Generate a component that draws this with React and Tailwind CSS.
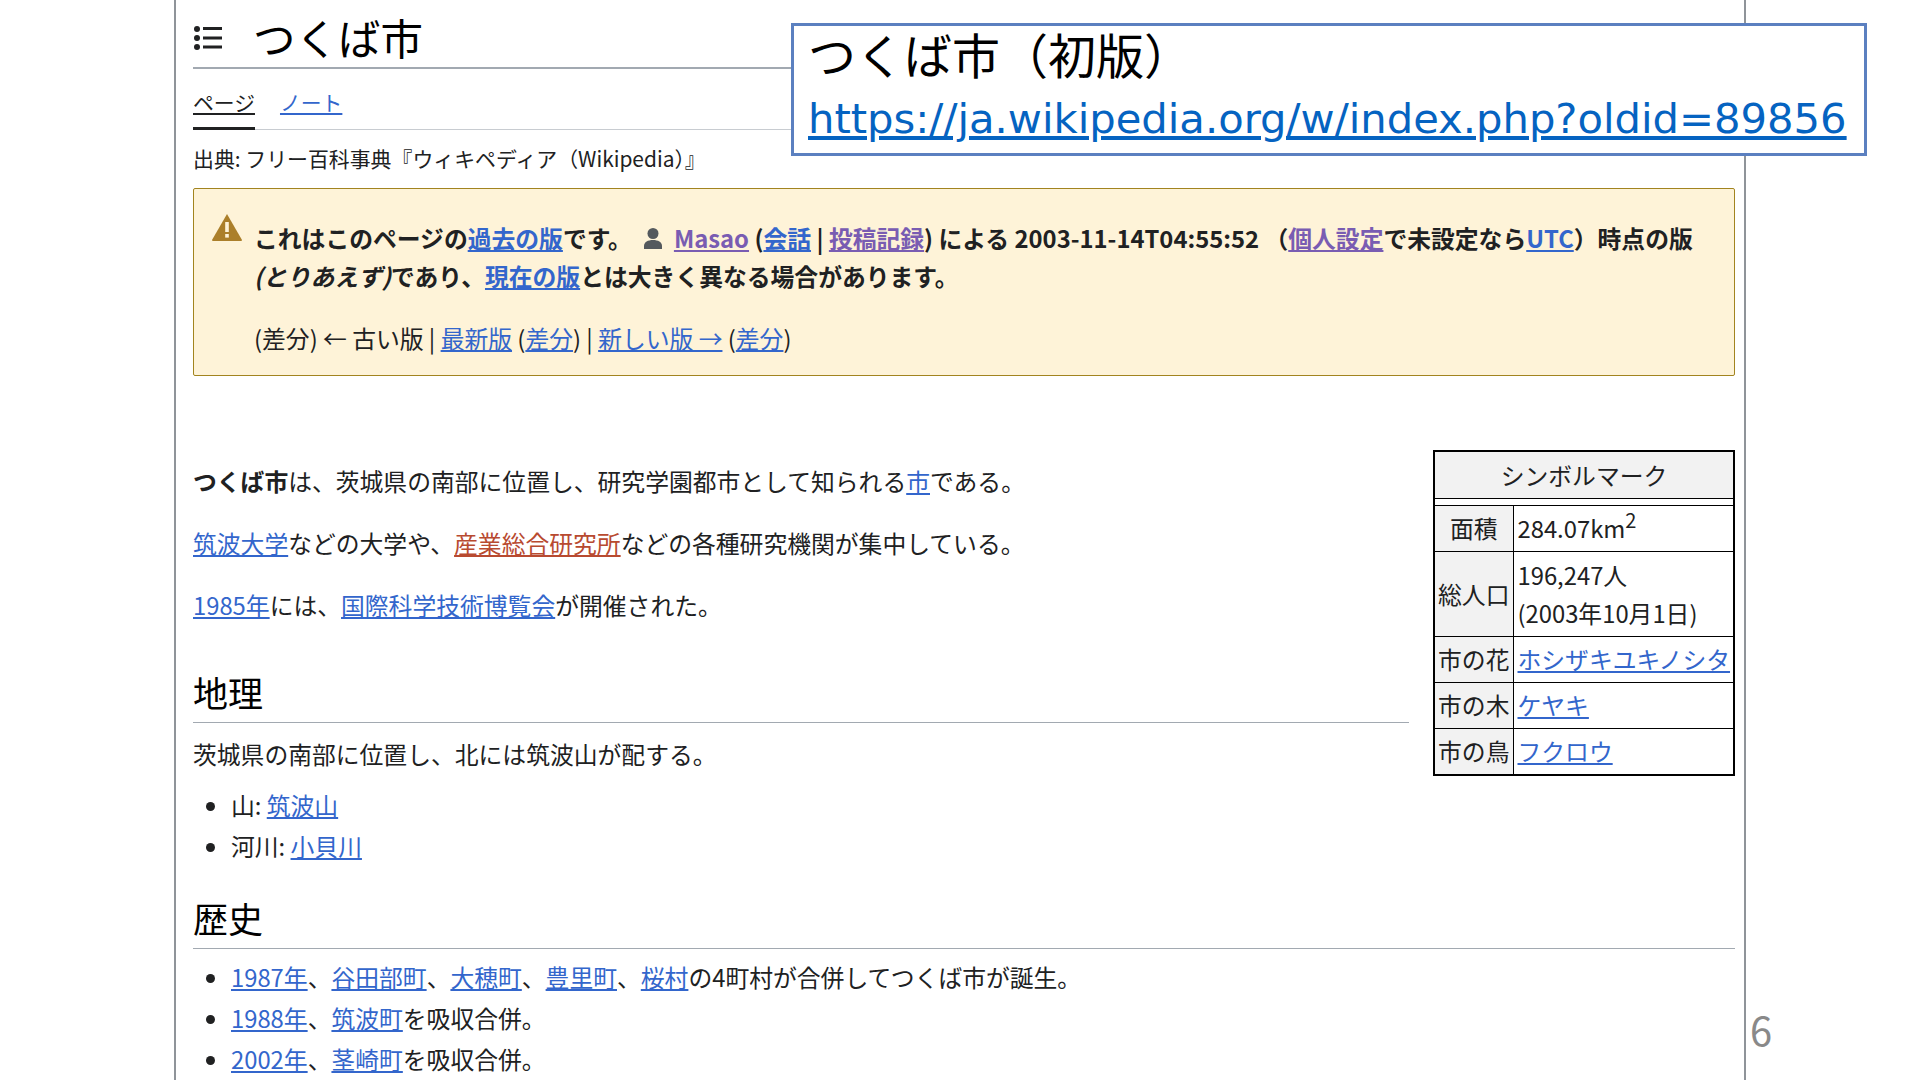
const A = ({ c = "text-[#3366cc]", children }) => <a className={`${c} underline`}>{children}</a>;
const V = ({ children }) => <a className="text-[#795cb2] underline">{children}</a>;

const Row = ({ h, label, children }) => (
  <tr>
    <th className={`${h} w-[79px] border border-black bg-[#f2f2f2] p-0 text-center font-normal whitespace-nowrap`}>{label}</th>
    <td className="border border-black py-0 pl-[4px] pr-0 whitespace-nowrap">{children}</td>
  </tr>
);

export default function App() {
  return (
    <div className="relative h-[1080px] w-[1920px] overflow-hidden bg-white text-[#202122] text-[23.8px] leading-[38px] font-['Noto_Sans_CJK_JP','Noto_Sans',sans-serif]">
      <div className="ml-[174px] h-[1080px] w-[1572px] border-x-2 border-[#8f9499] pl-[17px] pr-[9px]">
        <div className="flex h-[69px] items-start border-b-2 border-[#a2a9b1]">
          <svg className="mt-[24px] h-[28px] w-[30px]" viewBox="0 0 30 28" fill="#202122">
            <circle cx="4" cy="5" r="3" />
            <circle cx="4" cy="14" r="3" />
            <circle cx="4" cy="23" r="3" />
            <rect x="10" y="3" width="19" height="3" />
            <rect x="10" y="12.5" width="19" height="3" />
            <rect x="10" y="21.5" width="19" height="3" />
          </svg>
          <h1 className="ml-[30px] mt-[4px] text-[42.5px] leading-[66px] font-normal text-black">つくば市</h1>
        </div>
        <div className="flex h-[61px] gap-[25px] border-b border-[#c8ccd1] text-[20.8px] leading-[30px]">
          <div className="h-[61px] border-b-[3px] border-[#202122] pt-[18px]"><span className="underline">ページ</span></div>
          <div className="pt-[18px]"><span className="text-[#3366cc] underline">ノート</span></div>
        </div>
        <div className="mt-[13px] h-[31px] text-[20.9px] leading-[30px]">出典: フリー百科事典『ウィキペディア（Wikipedia）』</div>
        <div className="relative mt-[14px] h-[188px] rounded-[2px] border border-[#a2841f] bg-[#fef3d8] pl-[60px] pr-[20px] pt-[30px]">
          <svg className="absolute left-[17px] top-[24px] h-[28px] w-[32px]" viewBox="0 0 32 28">
            <path d="M16 1 L31 27 a1 1 0 0 1 -1 1 H2 a1 1 0 0 1 -1 -1 Z" fill="#ab7f2a" />
            <rect x="14.2" y="9" width="3.6" height="10" fill="#fef3d8" />
            <rect x="14.2" y="21" width="3.6" height="3.6" fill="#fef3d8" />
          </svg>
          <div className="font-bold">
            これはこのページの<A>過去の版</A>です。
            <svg className="ml-[10px] mr-[10px] inline-block h-[24px] w-[22px] align-[-3px]" viewBox="0 0 22 24" fill="#54595d">
              <circle cx="11" cy="6.5" r="5.5" />
              <path d="M2 22 v-3 c0 -4 4 -6 9 -6 s9 2 9 6 v3 Z" />
            </svg>
            <V>Masao</V> (<A>会話</A> | <V>投稿記録</V>) による 2003-11-14T04:55:52 （<V>個人設定</V>で未設定なら<A>UTC</A>）時点の版
            <br />
            <i>(とりあえず)</i>であり、<A>現在の版</A>とは大きく異なる場合があります。
          </div>
          <div className="mt-[24px]">
            (差分) ← 古い版 | <A>最新版</A> (<A>差分</A>) | <A>新しい版 →</A> (<A>差分</A>)
          </div>
        </div>

        <table className="float-right mt-[74px] ml-[24px] w-[302px] border-collapse border-2 border-black leading-[38px]">
          <tbody>
            <tr>
              <th colSpan={2} className="h-[47px] border border-black bg-[#f2f2f2] p-0 text-center font-normal">シンボルマーク</th>
            </tr>
            <tr><td colSpan={2} className="h-[7px] border border-black p-0"></td></tr>
            <Row h="h-[46px]" label="面積">284.07km<sup className="text-[20px] leading-none">2</sup></Row>
            <Row h="h-[85px]" label="総人口">196,247人<br />(2003年10月1日)</Row>
            <Row h="h-[46px]" label="市の花"><A>ホシザキユキノシタ</A></Row>
            <Row h="h-[46px]" label="市の木"><A>ケヤキ</A></Row>
            <Row h="h-[47px]" label="市の鳥"><A>フクロウ</A></Row>
          </tbody>
        </table>

        <p className="mt-[85.5px]"><b>つくば市</b>は、茨城県の南部に位置し、研究学園都市として知られる<A>市</A>である。</p>
        <p className="mt-[24.5px]"><A>筑波大学</A>などの大学や、<A c="text-[#b84a30]">産業総合研究所</A>などの各種研究機関が集中している。</p>
        <p className="mt-[24px]"><A>1985年</A>には、<A>国際科学技術博覧会</A>が開催された。</p>

        <h2 className="mt-[42px] overflow-hidden border-b border-[#a2a9b1] pb-[4px] text-[35px] leading-[52px] font-normal text-black">地理</h2>
        <p className="mt-[12px]">茨城県の南部に位置し、北には筑波山が配する。</p>
        <ul className="mt-[13px] list-disc pl-[38px] marker:text-[#202122]">
          <li className="h-[41px]">山: <A>筑波山</A></li>
          <li className="h-[41px]">河川: <A>小貝川</A></li>
        </ul>
        <h2 className="mt-[23.5px] overflow-hidden border-b border-[#a2a9b1] pb-[4px] text-[35px] leading-[52px] font-normal text-black">歴史</h2>
        <ul className="mt-[9.5px] list-disc pl-[38px]">
          <li className="h-[41px]"><A>1987年</A>、<A>谷田部町</A>、<A>大穂町</A>、<A>豊里町</A>、<A>桜村</A>の4町村が合併してつくば市が誕生。</li>
          <li className="h-[41px]"><A>1988年</A>、<A>筑波町</A>を吸収合併。</li>
          <li className="h-[41px]"><A>2002年</A>、<A>茎崎町</A>を吸収合併。</li>
        </ul>
      </div>

      <div className="absolute left-[791px] top-[23px] h-[133px] w-[1076px] border-[3px] border-[#5b80c0] bg-white pl-[14px]">
        <div className="-mt-[3px] text-[48px] leading-[60px] text-black">つくば市（初版）</div>
        <a className="block mt-[6px] font-['DejaVu_Sans',sans-serif] text-[41.7px] leading-[60px] text-[#0563c1] underline">https://ja.wikipedia.org/w/index.php?oldid=89856</a>
      </div>
      <div className="absolute left-[1750px] top-[1002px] text-[40px] leading-[54px] text-[#898989]">6</div>
    </div>
  );
}
